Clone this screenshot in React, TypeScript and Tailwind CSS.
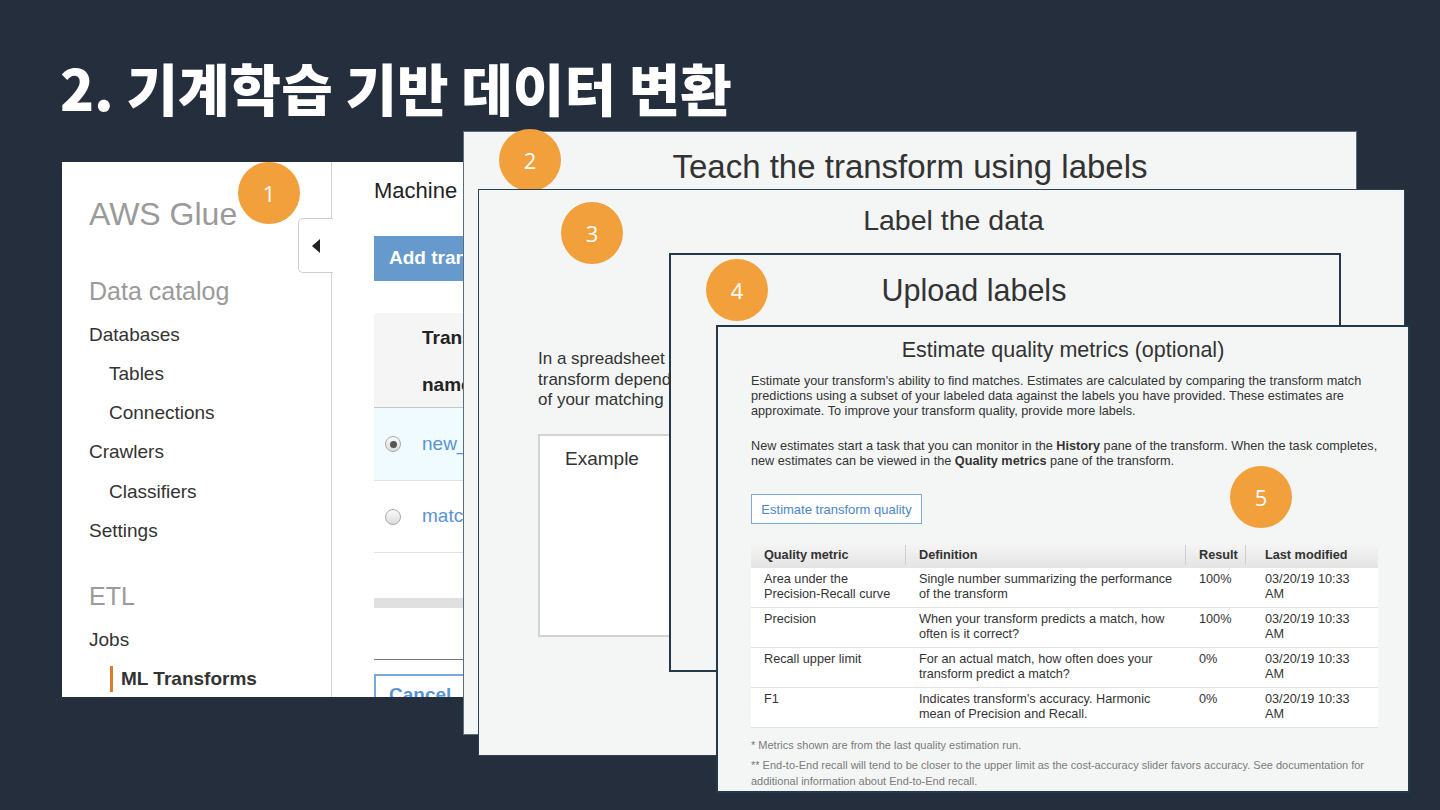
import React from "react";

const SANS = { fontFamily: '"Liberation Sans", Arial, sans-serif' };

function Badge({ n, className }: { n: string; className: string }) {
  return (
    <div
      className={`absolute w-[62px] h-[62px] rounded-full bg-[#f1a03b] flex items-center justify-center text-white text-[22px] ${className}`}
      style={{ fontFamily: '"Open Sans", "Noto Sans", sans-serif' }}
    >
      {n}
    </div>
  );
}

function Radio({ checked }: { checked?: boolean }) {
  return (
    <div className="w-[16px] h-[16px] rounded-full border border-[#a9a9a9] bg-gradient-to-b from-[#fafafa] to-[#dcdcdc] flex items-center justify-center">
      {checked && <div className="w-[7px] h-[7px] rounded-full bg-[#555]" />}
    </div>
  );
}

function GlueShot() {
  return (
    <div className="absolute left-[62px] top-[162px] w-[420px] h-[535px] bg-white overflow-hidden flex" style={SANS}>
      <div className="w-[270px] shrink-0 border-r border-[#d3d3d3] pl-[27px] pt-[28px] flex flex-col">
        <div className="shrink-0 h-[48px] flex items-center text-[32px] text-[#9a9a9a]">AWS Glue</div>
        <div className="shrink-0 mt-[35px] h-[38px] flex items-center text-[25px] text-[#9a9a9a]">Data catalog</div>
        <div className="shrink-0 mt-[4px] h-[39.5px] flex items-center text-[19px] text-[#333]">Databases</div>
        <div className="shrink-0 h-[39.3px] flex items-center text-[19px] text-[#333] pl-[20px]">Tables</div>
        <div className="shrink-0 h-[39.3px] flex items-center text-[19px] text-[#333] pl-[20px]">Connections</div>
        <div className="shrink-0 h-[39.3px] flex items-center text-[19px] text-[#333]">Crawlers</div>
        <div className="shrink-0 h-[39.3px] flex items-center text-[19px] text-[#333] pl-[20px]">Classifiers</div>
        <div className="shrink-0 h-[39.3px] flex items-center text-[19px] text-[#333]">Settings</div>
        <div className="shrink-0 mt-[27px] h-[38px] flex items-center text-[25px] text-[#9a9a9a]">ETL</div>
        <div className="shrink-0 mt-[5px] h-[39px] flex items-center text-[19px] text-[#333]">Jobs</div>
        <div className="shrink-0 h-[39px] flex items-center">
          <div className="ml-[21px] border-l-[3px] border-[#dd7a2c] pl-[8px] h-[26px] flex items-center text-[19px] font-bold text-[#333]">
            ML Transforms
          </div>
        </div>
      </div>
      <div className="absolute left-[236px] top-[56px] w-[35px] h-[55px] bg-white border border-r-0 border-[#cfcfcf] rounded-l-[5px] flex items-center justify-center">
        <svg width="10" height="14" viewBox="0 0 10 14">
          <polygon points="9,0 9,14 1,7" fill="#222" />
        </svg>
      </div>
      <div className="flex-1 pl-[42px] flex flex-col">
        <div className="shrink-0 mt-[14px] h-[28px] flex items-center text-[22px] text-[#222] whitespace-nowrap">Machine learning transforms</div>
        <div className="shrink-0 mt-[32px] h-[45px] w-[200px] bg-[#6699cc] flex items-center pl-[15px] text-[19px] font-bold text-white whitespace-nowrap">
          Add transform
        </div>
        <div className="shrink-0 mt-[32px] h-[95px] w-[200px] bg-[#f5f5f5] border-b border-[#c8c8c8] pl-[48px] pt-[1px] text-[19px] font-bold text-[#222] leading-[47px]">
          <div>Transform</div>
          <div>name</div>
        </div>
        <div className="shrink-0 h-[73px] w-[200px] bg-[#f0fbff] border-b border-[#e2e2e2] flex items-center">
          <div className="w-[48px] flex justify-center pr-[10px]">
            <Radio checked />
          </div>
          <span className="text-[19px] text-[#5a93d3]">new_transform</span>
        </div>
        <div className="shrink-0 h-[72px] w-[200px] border-b border-[#e2e2e2] flex items-center">
          <div className="w-[48px] flex justify-center pr-[10px]">
            <Radio />
          </div>
          <span className="text-[19px] text-[#5a93d3]">match_transform</span>
        </div>
        <div className="shrink-0 mt-[45px] h-[10px] w-[200px] bg-[#e0e0e0]" />
        <div className="shrink-0 mt-[51px] h-px w-[200px] bg-[#777]" />
        <div className="shrink-0 mt-[14px] h-[42px] w-[120px] border-2 border-[#79a9dc] flex items-center pl-[13px] text-[19px] font-bold text-[#5a93d3]">
          Cancel
        </div>
      </div>
    </div>
  );
}

const rows = [
  ["Area under the Precision-Recall curve", ["Single number summarizing the performance", "of the transform"], "100%"],
  ["Precision", ["When your transform predicts a match, how", "often is it correct?"], "100%"],
  ["Recall upper limit", ["For an actual match, how often does your", "transform predict a match?"], "0%"],
  ["F1", ["Indicates transform's accuracy. Harmonic", "mean of Precision and Recall."], "0%"],
] as const;

function MetricsPanel() {
  return (
    <div className="absolute left-[716px] top-[325px] w-[694px] h-[468px] bg-[#f4f6f6] border-2 border-[#22384b] flex flex-col" style={SANS}>
      <div className="shrink-0 h-[46px] flex items-center justify-center text-[21.5px] text-[#333]">Estimate quality metrics (optional)</div>
      <div className="pl-[33px] pt-[1px] text-[12.7px] leading-[15px] text-[#333] whitespace-nowrap">
        <div>Estimate your transform's ability to find matches. Estimates are calculated by comparing the transform match</div>
        <div>predictions using a subset of your labeled data against the labels you have provided. These estimates are</div>
        <div>approximate. To improve your transform quality, provide more labels.</div>
        <div className="mt-[20px]">
          New estimates start a task that you can monitor in the <b>History</b> pane of the transform. When the task completes,
        </div>
        <div>
          new estimates can be viewed in the <b>Quality metrics</b> pane of the transform.
        </div>
        <div className="mt-[25px] h-[30px] w-[171px] bg-white border border-[#7eaad8] flex items-center justify-center text-[13px] text-[#4d86c6]">
          Estimate transform quality
        </div>
        <div className="mt-[18px] w-[627px]">
          <div className="h-[26px] flex bg-gradient-to-b from-[#f6f6f6] to-[#e4e4e4] text-[12.7px] font-bold text-[#333]">
            <div className="w-[155px] flex items-center pl-[13px] border-r border-[#cfcfcf] my-[3px]">Quality metric</div>
            <div className="w-[280px] flex items-center pl-[13px] border-r border-[#cfcfcf] my-[3px]">Definition</div>
            <div className="w-[60px] flex items-center pl-[13px] border-r border-[#cfcfcf] my-[3px]">Result</div>
            <div className="flex-1 flex items-center pl-[19px]">Last modified</div>
          </div>
          {rows.map((r, i) => (
            <div key={i} className="h-[40px] flex bg-white border-b border-[#e2e2e2] pt-[4px] text-[12.7px] leading-[15px] text-[#333] whitespace-normal">
              <div className="w-[155px] pl-[13px] pr-[10px]">{r[0]}</div>
              <div className="w-[280px] pl-[13px] whitespace-nowrap">
                <div>{r[1][0]}</div>
                <div>{r[1][1]}</div>
              </div>
              <div className="w-[60px] pl-[13px]">{r[2]}</div>
              <div className="flex-1 pl-[19px]">
                <div>03/20/19 10:33</div>
                <div>AM</div>
              </div>
            </div>
          ))}
        </div>
        <div className="mt-[10px] text-[11px] leading-[14px] text-[#7a7a7a]">* Metrics shown are from the last quality estimation run.</div>
        <div className="mt-[5px] text-[11px] leading-[16px] text-[#7a7a7a]">
          <div>** End-to-End recall will tend to be closer to the upper limit as the cost-accuracy slider favors accuracy. See documentation for</div>
          <div>additional information about End-to-End recall.</div>
        </div>
      </div>
    </div>
  );
}

export default function App() {
  return (
    <div className="relative w-[1440px] h-[810px] overflow-hidden bg-[#252e3c]">
      <div
        className="pt-[59px] pl-[60px] text-[56px] leading-[56px] font-black text-white"
        style={{ fontFamily: '"Noto Sans CJK KR", "Noto Sans", sans-serif' }}
      >
        2. 기계학습 기반 데이터 변환
      </div>

      <GlueShot />
      <Badge n="1" className="left-[238px] top-[162px]" />

      {/* Panel 2 */}
      <div className="absolute left-[463px] top-[131px] w-[894px] h-[604px] bg-[#f4f6f6] border border-[#5b6d7c]" style={SANS}>
        <div className="h-[70px] flex items-center justify-center text-[33px] text-[#333]">Teach the transform using labels</div>
      </div>
      <Badge n="2" className="left-[499px] top-[129px]" />

      {/* Panel 3 */}
      <div className="absolute left-[478px] top-[189px] w-[927px] h-[567px] bg-[#f4f6f6] border-[1.5px] border-[#2a4053] flex flex-col" style={SANS}>
        <div className="shrink-0 h-[60px] flex items-center justify-center pl-[24px] text-[28.5px] text-[#333]">Label the data</div>
        <div className="shrink-0 mt-[99px] pl-[59px] text-[17px] leading-[20.5px] text-[#333] whitespace-nowrap">
          <div>In a spreadsheet editor, add a label to each record of the labeling file. The quality of your</div>
          <div>transform depends on the quality of your labels and the consistency</div>
          <div>of your matching decisions.</div>
        </div>
        <div className="shrink-0 mt-[23px] ml-[59px] w-[360px] h-[203px] bg-white border-2 border-[#d3d3d3] pl-[25px] pt-[11px] text-[19px] leading-[24px] text-[#333]">
          Example
        </div>
      </div>
      <Badge n="3" className="left-[561px] top-[202px]" />

      {/* Panel 4 */}
      <div className="absolute left-[669px] top-[253px] w-[672px] h-[419px] bg-[#f4f6f6] border-2 border-[#22384b]" style={SANS}>
        <div className="h-[72px] flex items-center justify-center pr-[62px] text-[30.5px] text-[#333]">Upload labels</div>
      </div>
      <Badge n="4" className="left-[706px] top-[259px]" />

      <MetricsPanel />
      <Badge n="5" className="left-[1230px] top-[466px]" />
    </div>
  );
}
